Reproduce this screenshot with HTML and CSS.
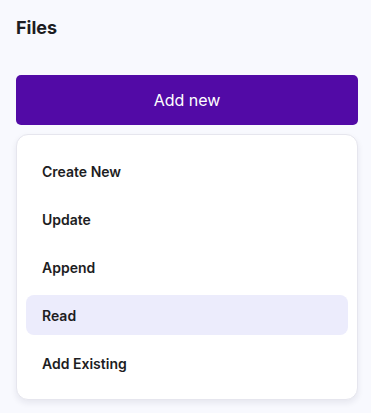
FILE: index.html
```html
<!DOCTYPE html>
<html lang="en">
<head>
    <meta charset="UTF-8">
    <meta name="viewport" content="width=device-width, initial-scale=1.0">
    <title>Files</title>
    <link rel="stylesheet" href="styles.css">
</head>
<body>
    <main class="files-panel">
        <h1 class="panel-title">Files</h1>

        <button class="add-button" type="button">Add new</button>

        <ul class="add-menu">
            <li class="menu-item">Create New</li>
            <li class="menu-item">Update</li>
            <li class="menu-item">Append</li>
            <li class="menu-item is-active">Read</li>
            <li class="menu-item">Add Existing</li>
        </ul>
    </main>
</body>
</html>
```

FILE: styles.css
```css
/* --- reset --- */
* {
    box-sizing: border-box;
    margin: 0;
    padding: 0;
}

body {
    font-family: 'Inter', 'Liberation Sans', sans-serif;
    background-color: #f8f9fe;
    color: #1d1d22;
    height: 100vh;
    overflow: hidden;
}

/* --- panel --- */
.files-panel {
    padding: 17px 13px 0 16px;
    display: flex;
    flex-direction: column;
}

.panel-title {
    font-size: 18px;
    font-weight: 700;
    line-height: 22px;
    margin-bottom: 36px;
}

/* --- add button --- */
.add-button {
    height: 50px;
    width: 100%;
    border: none;
    border-radius: 5px;
    background-color: #520aa6;
    color: #ffffff;
    font-family: 'Inter', 'Liberation Sans', sans-serif;
    font-size: 16px;
    font-weight: 400;
    cursor: pointer;
}

/* --- dropdown --- */
.add-menu {
    list-style: none;
    margin-top: 9px;
    background-color: #ffffff;
    border: 1px solid #e6e6ee;
    border-radius: 12px;
    box-shadow: 0 3px 6px rgba(20, 20, 60, 0.08);
    padding: 16px 9px;
    display: flex;
    flex-direction: column;
    gap: 8px;
}

.menu-item {
    height: 40px;
    display: flex;
    align-items: center;
    padding-left: 16px;
    border-radius: 8px;
    font-size: 14px;
    font-weight: 600;
    cursor: pointer;
}

.menu-item.is-active {
    background-color: #ececfc;
}
```
